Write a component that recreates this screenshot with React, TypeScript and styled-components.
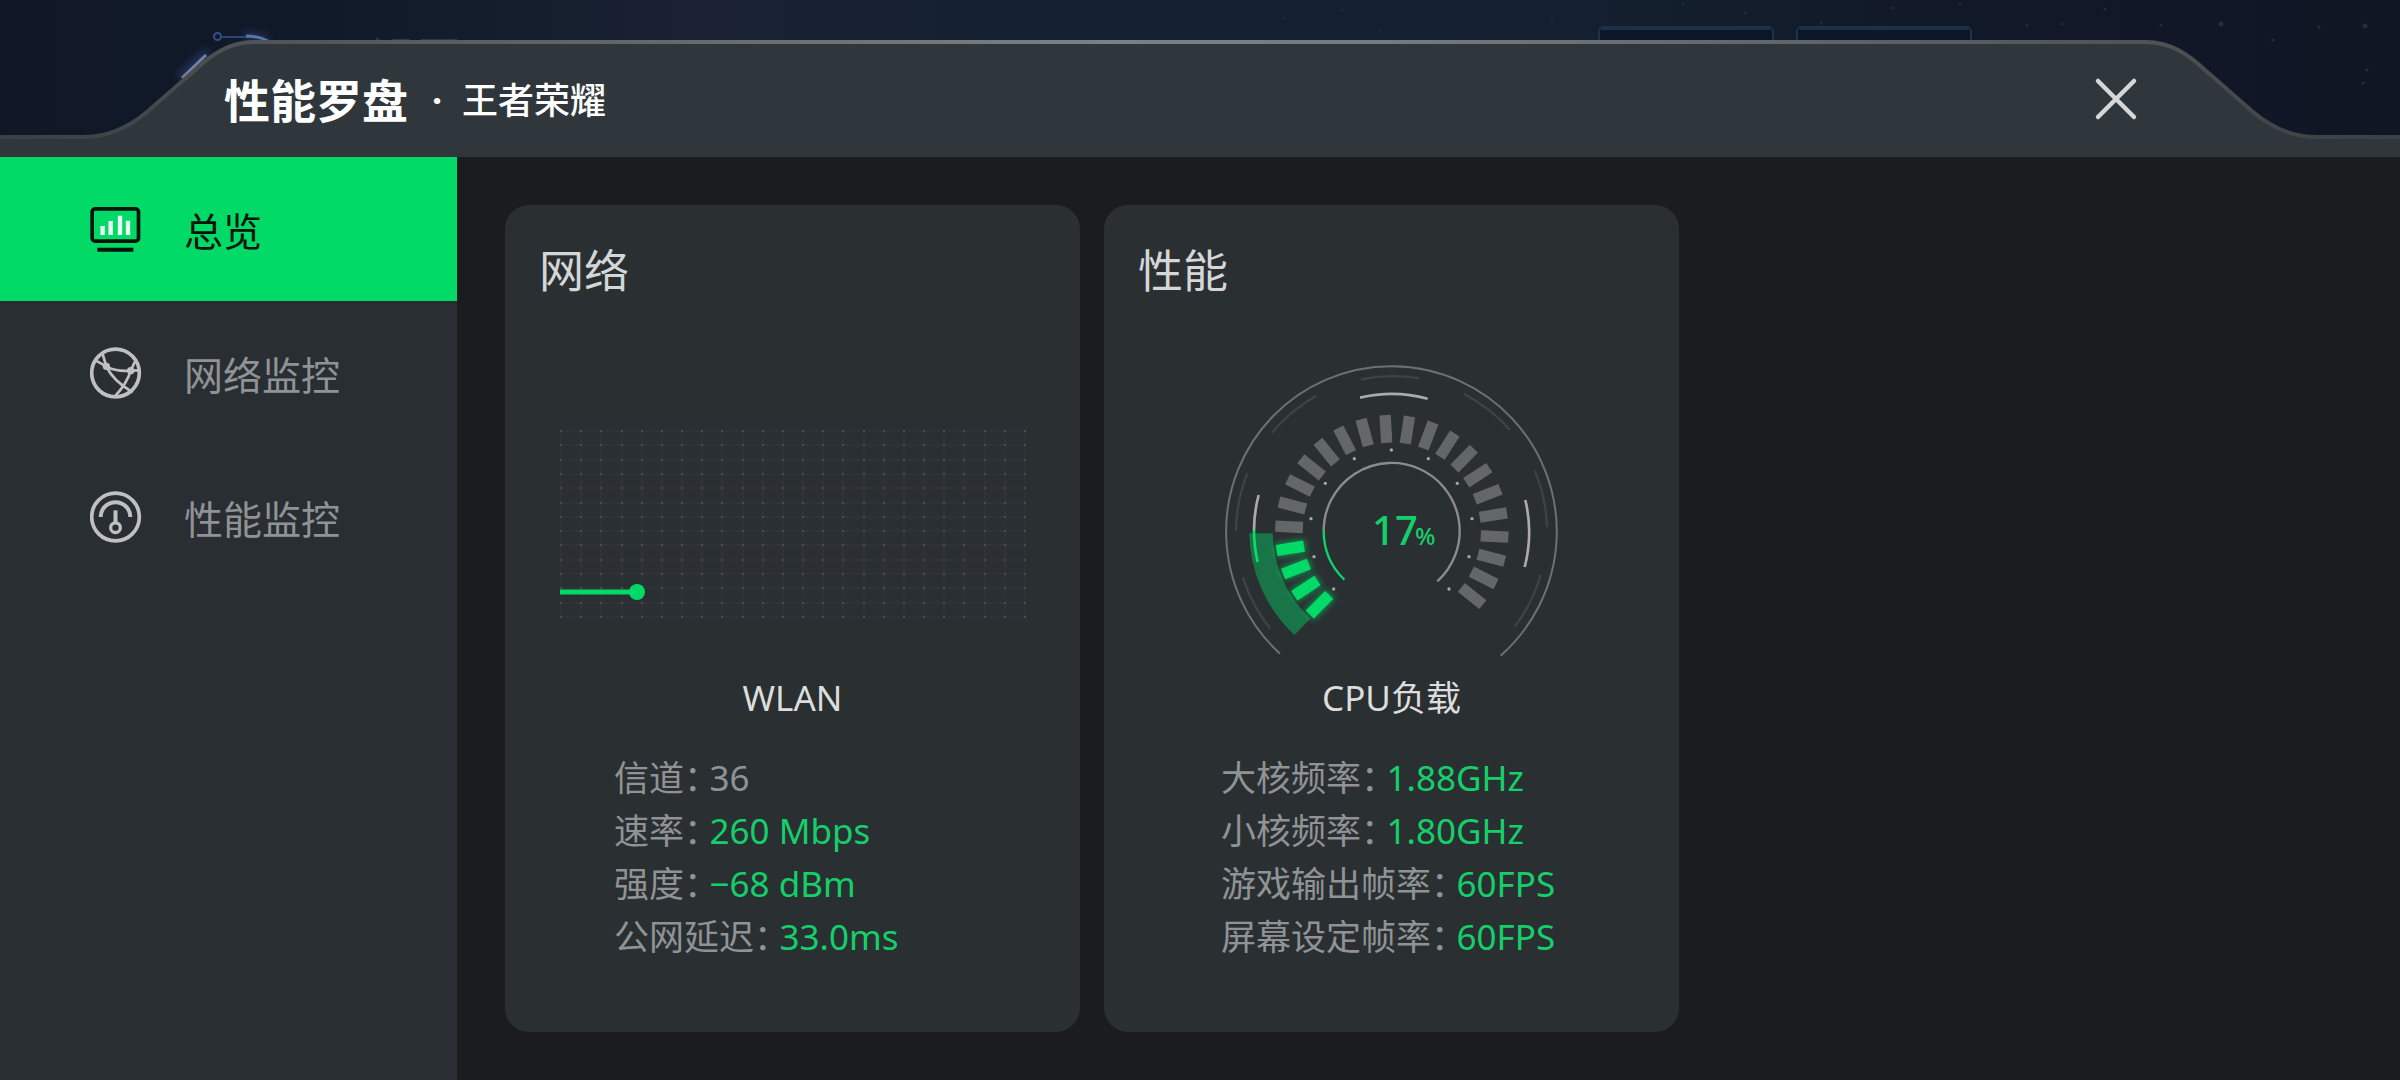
import React, { useState } from "react";
import styled, { createGlobalStyle } from "styled-components";

const color = {
  accent: "#02da68",
  value: "#14cf6a",
  header: "#30373c",
  panel: "#292e32",
  page: "#1b1c1f",
  bright: "#d4d6d7",
  muted: "#909396",
};

const GlobalStyle = createGlobalStyle`
  * { box-sizing: border-box; }
  body {
    margin: 0;
    background: ${color.page};
    font-family: "Noto Sans", "Noto Sans CJK SC", sans-serif;
  }
  h1, h2, h3, p, dl, dd, ul { margin: 0; padding: 0; font-weight: 400; }
`;

const Page = styled.div`
  display: flex;
  flex-direction: column;
  min-height: 100vh;
`;

/* ---------- header ---------- */

const Header = styled.header`
  display: grid;
  height: 157px;
  background: linear-gradient(90deg, #101827 0%, #111a29 14%, #1a2233 30%, #142030 42%, #14202f 66%, #111827 82%, #111625 100%);
  overflow: hidden;
  > * { grid-area: 1 / 1; min-width: 0; }
`;

const Scene = styled.div`
  display: flex;
  justify-content: space-between;
`;

const TabShape = styled.div`
  display: flex;
`;

const TabCorner = styled.svg<{ $flip?: boolean }>`
  flex: none;
  width: 260px;
  height: 157px;
  ${(p) => (p.$flip ? "transform: scaleX(-1);" : "")}
`;

const TabMiddle = styled.div`
  flex: 1;
  margin-top: 40px;
  background:
    linear-gradient(90deg, #505457, #7b8084 45%, #757a7e 60%, #505356) top / 100% 4px no-repeat,
    ${color.header};
`;

const HeaderBar = styled.div`
  display: flex;
  align-items: center;
  justify-content: space-between;
  padding: 40px 256px 0 224px;
`;

const Heading = styled.div`
  display: flex;
  align-items: center;
  padding-top: 3px;
  color: #fff;
`;

const AppTitle = styled.h1`
  font-size: 46px;
  line-height: 64px;
  font-weight: 700;
`;

const Separator = styled.span`
  width: 54px;
  padding-left: 4px;
  text-align: center;
  font-size: 36px;
  line-height: 53px;
  font-weight: 700;
`;

const GameName = styled.p`
  font-size: 36px;
  line-height: 53px;
  font-weight: 500;
`;

const CloseButton = styled.button`
  display: grid;
  place-items: center;
  width: 56px;
  height: 56px;
  padding: 0;
  border: 0;
  background: none;
  cursor: pointer;
`;

/* ---------- body ---------- */

const Body = styled.div`
  flex: 1;
  display: flex;
`;

const Sidebar = styled.nav`
  flex: none;
  width: 457px;
  background: ${color.panel};
`;

const NavButton = styled.button<{ $active: boolean }>`
  display: flex;
  align-items: center;
  gap: 42px;
  width: 100%;
  height: 144px;
  padding: 0 0 0 90px;
  border: 0;
  background: ${(p) => (p.$active ? color.accent : "transparent")};
  color: ${(p) => (p.$active ? "#04140b" : color.muted)};
  font-family: inherit;
  font-size: 39px;
  line-height: 56px;
  text-align: left;
  cursor: pointer;
`;

const NavLabel = styled.span`
  padding-top: 3px;
`;

const NavIcon = styled.svg`
  flex: none;
  width: 52px;
  height: 52px;
  fill: none;
`;

const Content = styled.main`
  flex: 1;
  display: grid;
  grid-template-columns: repeat(auto-fill, 575px);
  gap: 24px;
  padding: 48px;
`;

const Card = styled.section`
  display: flex;
  flex-direction: column;
  padding: 34px 34px 32px;
  border-radius: 24px;
  background: #2a2f32;
`;

const CardTitle = styled.h2`
  color: ${color.bright};
  font-size: 45px;
  line-height: 64px;
`;

const Figure = styled.div`
  display: flex;
  flex-direction: column;
  align-items: center;
  justify-content: flex-end;
  height: 368px;
`;

const Plot = styled.svg`
  width: 466px;
  height: 188px;
  margin-bottom: 53px;
`;

const Gauge = styled.svg`
  width: 380px;
  height: 332px;
`;

const Caption = styled.h3`
  color: #dcdddd;
  font-size: 35px;
  line-height: 53px;
  text-align: center;
`;

const Stats = styled.dl<{ $inset: number }>`
  padding: 27px 0 0 ${(p) => p.$inset}px;
  font-size: 35px;
  line-height: 53px;
  white-space: nowrap;
`;

const StatRow = styled.div`
  display: flex;
  gap: 8px;
`;

const StatLabel = styled.dt`
  color: ${color.muted};
  font-feature-settings: "halt";
`;

const StatValue = styled.dd<{ $plain?: boolean }>`
  color: ${(p) => (p.$plain ? color.muted : color.value)};
`;

/* ---------- icons ---------- */

const OverviewIcon = () => (
  <NavIcon viewBox="0 0 156 156" aria-hidden="true">
    <rect x="6.5" y="17.5" width="139" height="97" rx="9" stroke="#04140b" strokeWidth="11" />
    <path d="M22 140H130" stroke="#04140b" strokeWidth="12" />
    <path d="M38 96V69M62 96V54M90 96V38M114 96V53" stroke="#effff5" strokeWidth="13" />
  </NavIcon>
);

const NetworkIcon = () => (
  <NavIcon viewBox="0 0 156 156" stroke="#bfc0c1" aria-hidden="true">
    <circle cx="76.5" cy="78" r="71.5" strokeWidth="11" />
    <path
      d="M16 40L49 58L37 18M49 58Q76 74 122 71L152 70M122 71L138 38M49 58Q68 100 128 136M122 71Q112 108 74 149"
      strokeWidth="8"
    />
    <circle cx="49" cy="58" r="11" fill="#bfc0c1" stroke="none" />
    <circle cx="122" cy="71" r="11" fill="#bfc0c1" stroke="none" />
  </NavIcon>
);

const PerformanceIcon = () => (
  <NavIcon viewBox="0 0 156 156" stroke="#bfc0c1" aria-hidden="true">
    <circle cx="76.5" cy="78" r="71.5" strokeWidth="11" />
    <path d="M32 78A44.5 44.5 0 0 1 121 78" strokeWidth="12" />
    <path d="M76.5 58V96" strokeWidth="12" />
    <circle cx="76.5" cy="110" r="14.5" strokeWidth="10" />
  </NavIcon>
);

const Corner = ({ flip }: { flip?: boolean }) => (
  <TabCorner $flip={flip} viewBox="0 0 260 157" aria-hidden="true">
    <defs>
      <linearGradient id="edge" gradientUnits="userSpaceOnUse" x1="0" y1="0" x2="260" y2="0">
        <stop offset="0" stopColor="#3a3f43" />
        <stop offset="0.55" stopColor="#43474a" />
        <stop offset="1" stopColor="#505457" />
      </linearGradient>
    </defs>
    <path d="M0 137H83C108 137 128 128 147 112L195 70C212 54 230 42 254 42H260V157H0Z" fill={color.header} />
    <path d="M0 137H83C108 137 128 128 147 112L195 70C212 54 230 42 254 42H260" fill="none" stroke="url(#edge)" strokeWidth="4" />
  </TabCorner>
);

/* ---------- game scene behind the panel ---------- */

const LeftScene = () => (
  <svg width="700" height="157" viewBox="0 0 700 157" fill="none" aria-hidden="true">
    <defs>
      <filter id="glow" x="-50%" y="-50%" width="200%" height="200%">
        <feGaussianBlur stdDeviation="4" />
      </filter>
    </defs>
    <path d="M245 36Q258 36 268 42M180 78L208 52" stroke="#3a5090" strokeWidth="6" opacity="0.7" filter="url(#glow)" />
    <circle cx="217.500" cy="36.500" r="3.500" stroke="#34508c" strokeWidth="2" />
    <path d="M221 37H250" stroke="#2c4577" strokeWidth="2" />
    <path d="M246 36Q258 36 268 41" stroke="#5576a6" strokeWidth="3" />
    <path d="M182 78L206 55" stroke="#74829c" strokeWidth="3" />
    <path d="M376 38L381 42M392 40H410M421 40H457" stroke="#2b3850" strokeWidth="2" />
  </svg>
);

const stars = [
  [84, 18], [142, 10], [180, 30], [352, 22], [483, 4], [545, 13], [621, 23], [693, 8],
  [760, 4], [827, 25], [862, 24], [905, 9], [961, 25], [1021, 24], [1073, 40], [1119, 27],
  [1165, 26], [1167, 70], [1163, 83],
];

const RightScene = () => (
  <svg width="1200" height="157" viewBox="0 0 1200 157" fill="none" aria-hidden="true">
    {stars.map(([x, y]) => (
      <circle key={`${x}-${y}`} cx={x} cy={y} r={x === 1021 || x === 1165 ? 2.5 : 1.5} fill={x > 900 ? "#252e3b" : "#1a2d3d"} />
    ))}
    {[399, 597].map((x) => (
      <g key={x}>
        <rect x={x} y="27" width="174" height="60" rx="5" fill="#0b1728" stroke="#1c3350" strokeWidth="2" />
        <path d={`M${x + 3} 28H${x + 171}`} stroke="#1c304a" strokeWidth="4" />
      </g>
    ))}
  </svg>
);

/* ---------- network plot ---------- */

const COLS = 23;
const ROWS = 13;
const gridX = Array.from({ length: COLS + 1 }, (_, i) => 1 + Math.round((i * 464) / COLS));
const gridY = Array.from({ length: ROWS + 1 }, (_, i) => 1 + Math.round((i * 186) / ROWS));

const LatencyPlot = () => (
  <Plot viewBox="0 0 466 188" role="img" aria-label="WLAN">
    <path
      d={gridX.map((x) => `M${x} 0.5V187.5`).join("") + gridY.map((y) => `M0.5 ${y}H465.5`).join("")}
      stroke="#32373a"
      strokeWidth="1"
    />
    {gridY.map((y) => gridX.map((x) => (
      <rect key={`${x}-${y}`} x={x - 1} y={y - 0.5} width="2" height="1" fill="#5f6466" />
    )))}
    <path d="M0 162H78" stroke={color.accent} strokeWidth="5" />
    <circle cx="77" cy="162" r="8" fill={color.accent} />
  </Plot>
);

/* ---------- CPU gauge ---------- */

const CX = 575.5;
const CY = 575;
const TICKS = 23;
const LIT = 4;
const ticks = Array.from({ length: TICKS }, (_, i) => ({ angle: -135.3 + i * 12, lit: i < LIT }));
const dots = [
  [574, 330], [463, 356], [376, 430], [333, 536], [342, 650], [401, 747],
  [685, 356], [772, 430], [816, 536], [807, 650], [747, 747],
];

const CpuGauge = ({ percent }: { percent: number }) => (
  <Gauge viewBox="2 -1 380 332" role="img" aria-label={`CPU负载 ${percent}%`}>
    <defs>
      <filter id="tickGlow" x="-40%" y="-40%" width="180%" height="180%">
        <feGaussianBlur stdDeviation="10" />
      </filter>
    </defs>
    <g transform="scale(0.33333)" fill="none">
      <path d="M240 941A496 496 0 1 1 902 947" stroke="#6d7173" strokeWidth="6" />
      <path
        d="M483 118A467 467 0 0 1 657 115M216 278A467 467 0 0 1 349 167M792 162A467 467 0 0 1 930 270M108 572A467 467 0 0 1 142 401M1004 392A467 467 0 0 1 1041 562M211 866A467 467 0 0 1 129 712M1022 705A467 467 0 0 1 944 860"
        stroke="#3e4346"
        strokeWidth="7"
      />
      <path
        d="M480 173A414 414 0 0 1 683 176M162 572A414 414 0 0 1 176 465M976 480A414 414 0 0 1 974 681"
        stroke="#aaabab"
        strokeWidth="8"
      />
      <path d="M148 580A427 427 0 0 0 283 885L331 836A357 357 0 0 1 218 580Z" fill="#197547" />
      <path d="M173 666A414 414 0 0 1 162 570" stroke="#0bdc6c" strokeWidth="8" />
      {ticks.filter((t) => t.lit).map((t) => (
        <rect key={t.angle} x={CX - 20} y={CY - 353} width="40" height="90" fill={color.accent} opacity="0.6"
          filter="url(#tickGlow)" transform={`rotate(${t.angle} ${CX} ${CY})`} />
      ))}
      {ticks.map((t) => (
        <rect key={t.angle} x={CX - 17} y={CY - 350} width="34" height="83" fill={t.lit ? color.accent : "#64676a"}
          transform={`rotate(${t.angle} ${CX} ${CY})`} />
      ))}
      {dots.map(([x, y]) => <circle key={`${x}-${y}`} cx={x} cy={y} r="5" fill="#a5a9ab" />)}
      <path d="M371 573A204 204 0 1 1 712 724" stroke="#8d8c8b" strokeWidth="7" />
      <path d="M433 719A204 204 0 0 1 371 573" stroke="#0fd46b" strokeWidth="7" />
    </g>
    <text x="172" y="205" fontSize="40" fontWeight="500" fill={color.value}>{percent}</text>
    <text x="215" y="205" fontSize="24" fontWeight="500" fill={color.value}>%</text>
  </Gauge>
);

/* ---------- data ---------- */

const navItems = [
  { id: "overview", label: "总览", Icon: OverviewIcon },
  { id: "network", label: "网络监控", Icon: NetworkIcon },
  { id: "performance", label: "性能监控", Icon: PerformanceIcon },
];

type Stat = { label: string; value: string; plain?: boolean };

const networkStats: Stat[] = [
  { label: "信道", value: "36", plain: true },
  { label: "速率", value: "260 Mbps" },
  { label: "强度", value: "−68 dBm" },
  { label: "公网延迟", value: "33.0ms" },
];

const cpuStats: Stat[] = [
  { label: "大核频率", value: "1.88GHz" },
  { label: "小核频率", value: "1.80GHz" },
  { label: "游戏输出帧率", value: "60FPS" },
  { label: "屏幕设定帧率", value: "60FPS" },
];

const StatList = ({ items, inset }: { items: Stat[]; inset: number }) => (
  <Stats $inset={inset}>
    {items.map((s) => (
      <StatRow key={s.label}>
        <StatLabel>{s.label}：</StatLabel>
        <StatValue $plain={s.plain}>{s.value}</StatValue>
      </StatRow>
    ))}
  </Stats>
);

export default function App() {
  const [active, setActive] = useState("overview");

  return (
    <Page lang="zh-CN">
      <GlobalStyle />
      <Header>
        <Scene>
          <LeftScene />
          <RightScene />
        </Scene>
        <TabShape>
          <Corner />
          <TabMiddle />
          <Corner flip />
        </TabShape>
        <HeaderBar>
          <Heading>
            <AppTitle>性能罗盘</AppTitle>
            <Separator>·</Separator>
            <GameName>王者荣耀</GameName>
          </Heading>
          <CloseButton type="button" aria-label="关闭">
            <svg width="44" height="44" viewBox="0 0 44 44" stroke="#d6d7d8" strokeWidth="4.5" strokeLinecap="round" aria-hidden="true">
              <path d="M4 4L40 40M40 4L4 40" />
            </svg>
          </CloseButton>
        </HeaderBar>
      </Header>
      <Body>
        <Sidebar>
          {navItems.map(({ id, label, Icon }) => (
            <NavButton
              key={id}
              type="button"
              $active={id === active}
              aria-current={id === active ? "page" : undefined}
              onClick={() => setActive(id)}
            >
              <Icon />
              <NavLabel>{label}</NavLabel>
            </NavButton>
          ))}
        </Sidebar>
        <Content>
          <Card>
            <CardTitle>网络</CardTitle>
            <Figure>
              <LatencyPlot />
            </Figure>
            <Caption>WLAN</Caption>
            <StatList items={networkStats} inset={75} />
          </Card>
          <Card>
            <CardTitle>性能</CardTitle>
            <Figure>
              <CpuGauge percent={17} />
            </Figure>
            <Caption>CPU负载</Caption>
            <StatList items={cpuStats} inset={83} />
          </Card>
        </Content>
      </Body>
    </Page>
  );
}
